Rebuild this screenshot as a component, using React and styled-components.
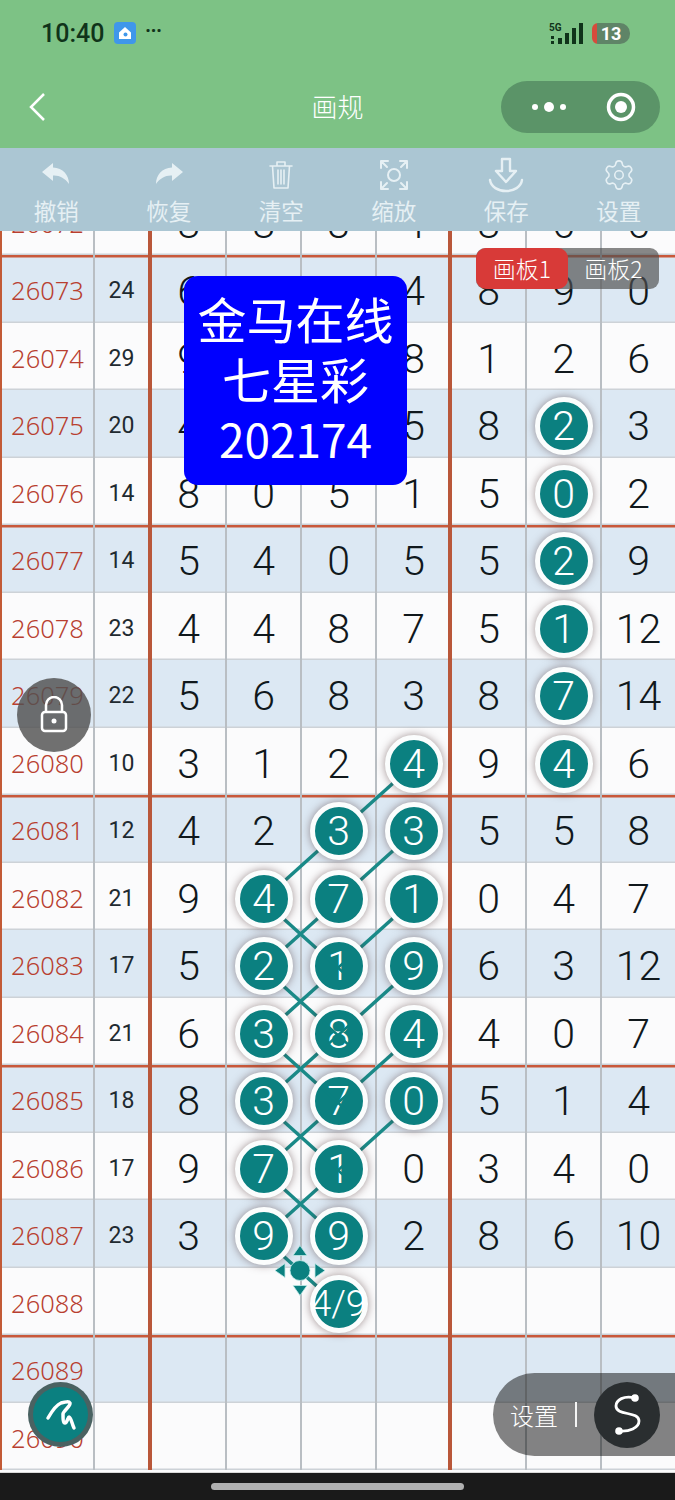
import React from "react";
import styled, { createGlobalStyle } from "styled-components";
import { Settings } from "lucide-react";

const ROW_H = 67.5;
const TEAL = "#0b8080";

const rows = [
  ["26072", "16", "8 8 3 4 8 6 6"],
  ["26073", "24", "6 1 0 4 8 9 0"],
  ["26074", "29", "9 3 2 8 1 2 6"],
  ["26075", "20", "4 3 2 5 8 *2 3"],
  ["26076", "14", "8 0 5 1 5 *0 2"],
  ["26077", "14", "5 4 0 5 5 *2 9"],
  ["26078", "23", "4 4 8 7 5 *1 12"],
  ["26079", "22", "5 6 8 3 8 *7 14"],
  ["26080", "10", "3 1 2 *4 9 *4 6"],
  ["26081", "12", "4 2 *3 *3 5 5 8"],
  ["26082", "21", "9 *4 *7 *1 0 4 7"],
  ["26083", "17", "5 *2 *1 *9 6 3 12"],
  ["26084", "21", "6 *3 *8 *4 4 0 7"],
  ["26085", "18", "8 *3 *7 *0 5 1 4"],
  ["26086", "17", "9 *7 *1 0 3 4 0"],
  ["26087", "23", "3 *9 *9 2 8 6 10"],
  ["26088", "", "- - *4/9 - - - -"],
  ["26089", "", "- - - - - - -"],
  ["26090", "", "- - - - - - -"],
];

// [col, row] of each end, col 0 is the first digit column
const links = [
  [[3, 8], [1, 10]],
  [[3, 9], [1, 11]],
  [[3, 10], [1, 12]],
  [[3, 11], [1, 13]],
  [[3, 12], [1, 14]],
  [[3, 13], [1, 15]],
  [[1, 10], [2, 11]],
  [[1, 11], [2, 12]],
  [[1, 12], [2, 13]],
  [[1, 13], [2, 14]],
  [[1, 14], [2, 15]],
  [[1, 15], [2, 16]],
];

// spots where the line shows through the ball
const crossed = [[2, 11], [2, 12], [2, 13], [2, 14]];

const px = (col) => 151 + 75 * (col + 0.5) - 0.5;
const py = (row) => ROW_H * (row + 0.5) + 3.5;

const GlobalStyle = createGlobalStyle`
  html, body {
    margin: 0;
    padding: 0;
    background: #1a1a1a;
  }
  body {
    font-family: "Noto Sans", "Noto Sans CJK SC", sans-serif;
  }
`;

const Page = styled.div`
  position: relative;
  width: 675px;
  height: 1500px;
  overflow: hidden;
  display: flex;
  flex-direction: column;
`;

const Header = styled.header`
  height: 148px;
  background: #7dc285;
  flex: none;
  display: flex;
  flex-direction: column;
`;

const StatusBar = styled.div`
  height: 66px;
  padding: 0 45px 0 41px;
  display: flex;
  align-items: center;
  color: #10331a;
`;

const Clock = styled.span`
  font-family: "Roboto", sans-serif;
  font-size: 25px;
  font-weight: 500;
  margin-right: 10px;
`;

const Dots = styled.span`
  font-size: 18px;
  font-weight: 700;
  letter-spacing: 0.5px;
  margin: -6px 0 0 9px;
`;

const StatusRight = styled.div`
  margin-left: auto;
  display: flex;
  align-items: center;
  gap: 6px;
`;

const Battery = styled.div`
  width: 38px;
  height: 21px;
  border-radius: 6px 10px 10px 6px;
  background: linear-gradient(90deg, #d64b3c 0 5px, #5f8467 5px);
  color: #fff;
  font-family: "Roboto", sans-serif;
  font-size: 18px;
  font-weight: 700;
  line-height: 21px;
  text-align: center;
`;

const NavBar = styled.div`
  height: 82px;
  padding: 0 15px 0 28px;
  display: flex;
  align-items: center;
  justify-content: space-between;
`;

const Title = styled.div`
  position: absolute;
  left: 0;
  right: 0;
  margin-top: -3px;
  text-align: center;
  color: #fff;
  font-size: 26px;
  font-family: "Noto Sans CJK SC", sans-serif;
  font-weight: 300;
`;

const Capsule = styled.div`
  width: 159px;
  height: 52px;
  border-radius: 26px;
  background: #5b9468;
  display: flex;
  align-items: center;
  justify-content: space-between;
  padding: 0 24px 0 30px;
  box-sizing: border-box;
`;

const Toolbar = styled.nav`
  height: 83px;
  flex: none;
  background: #abc6d3;
  display: flex;
  position: relative;
  z-index: 5;
`;

const ToolItem = styled.div`
  flex: 1;
  display: flex;
  flex-direction: column;
  align-items: center;
  color: #e6f0f4;
`;

const ToolIcon = styled.div`
  height: 32px;
  margin-top: 11px;
  display: flex;
  align-items: center;
  justify-content: center;
`;

const ToolLabel = styled.span`
  margin-top: 4px;
  font-family: "Noto Sans CJK SC", sans-serif;
  font-size: 22.5px;
  line-height: 30px;
`;

const Scroller = styled.main`
  flex: 1;
  overflow: hidden;
  position: relative;
  background: #fbfbfc;
`;

const Sheet = styled.div`
  position: relative;
  margin-top: -43.5px;
`;

const Row = styled.div`
  display: grid;
  grid-template-columns: 95px 57px repeat(7, 75px);
  width: 677px;
  height: ${ROW_H}px;
  background: ${(p) => (p.$shaded ? "#dce8f3" : "#fbfbfc")};
  box-shadow: inset 2px 0 0 #c25a36
    ${(p) => (p.$major ? ", inset 0 2.5px 0 #c9583a" : "")},
    inset 0 -1.5px 0 #cdd2d7;
`;

const IdCell = styled.div`
  display: flex;
  align-items: center;
  justify-content: center;
  padding-top: 3px;
  color: #b83f30;
  font-size: 25.5px;
  font-weight: 300;
  box-shadow: inset -2px 0 0 #b9bec3;
`;

const SumCell = styled.div`
  display: flex;
  align-items: center;
  justify-content: center;
  padding: 4px 4px 0 0;
  color: #1f2a30;
  font-size: 23px;
  font-weight: 400;
  font-family: "Roboto", sans-serif;
  box-shadow: inset -4px 0 0 #b9573a;
`;

const Cell = styled.div`
  display: flex;
  align-items: center;
  justify-content: center;
  padding: 5px 2px 0 0;
  color: #10181c;
  font-family: "Roboto", sans-serif;
  font-size: 41px;
  font-weight: 300;
  box-shadow: inset ${(p) => (p.$edge ? "-4px 0 0 #b9573a" : "-2px 0 0 #b9bec3")};
`;

const Ball = styled.div`
  position: relative;
  z-index: 2;
  flex: none;
  width: 48px;
  height: 48px;
  border-radius: 50%;
  background: ${TEAL};
  border: 5px solid #fbfdfd;
  box-shadow: 0 0 9px rgba(70, 40, 40, 0.5);
  color: #fff;
  display: flex;
  align-items: center;
  justify-content: center;
  font-size: ${(p) => (p.$long ? 37 : 41)}px;
  font-weight: 300;
  white-space: nowrap;
`;

const LineLayer = styled.svg`
  position: absolute;
  left: 0;
  top: 0;
  width: 675px;
  height: 1290px;
  z-index: ${(p) => p.$z};
  pointer-events: none;
`;

const Notice = styled.div`
  position: absolute;
  left: 184px;
  top: 276px;
  width: 223px;
  height: 209px;
  border-radius: 14px;
  background: #0000ff;
  color: #fff;
  font-family: "Noto Sans CJK SC", sans-serif;
  font-size: 49px;
  line-height: 59.5px;
  text-align: center;
  padding-top: 12px;
  box-sizing: border-box;
  z-index: 6;
`;

const NoticeNumber = styled.span`
  font-size: 46px;
`;

const Tabs = styled.div`
  position: absolute;
  left: 476px;
  top: 248px;
  width: 183px;
  height: 41px;
  z-index: 6;
  display: flex;
  border-radius: 9px;
  background: rgba(80, 80, 80, 0.68);
`;

const Tab = styled.div`
  flex: ${(p) => (p.$active ? "0 0 92px" : "1")};
  border-radius: 10px;
  background: ${(p) => (p.$active ? "#d83a38" : "transparent")};
  color: #fff;
  font-family: "Noto Sans CJK SC", sans-serif;
  font-size: 23px;
  font-weight: 300;
  line-height: 41px;
  text-align: center;
`;

const RoundButton = styled.div`
  position: absolute;
  z-index: 6;
  left: ${(p) => p.$x}px;
  top: ${(p) => p.$y}px;
  width: ${(p) => p.$size}px;
  height: ${(p) => p.$size}px;
  border-radius: 50%;
  box-sizing: border-box;
  background: ${(p) => p.$bg};
  border: ${(p) => p.$ring || "none"};
  display: flex;
  align-items: center;
  justify-content: center;
`;

const SidePill = styled.div`
  position: absolute;
  z-index: 6;
  right: 0;
  top: 1373px;
  width: 182px;
  height: 83px;
  border-radius: 42px 0 0 42px;
  background: rgba(10, 10, 10, 0.5);
  display: flex;
  align-items: center;
  padding-left: 17px;
  box-sizing: border-box;
`;

const PillLabel = styled.span`
  color: #fff;
  font-family: "Noto Sans CJK SC", sans-serif;
  font-size: 24px;
  font-weight: 300;
`;

const PillDivider = styled.span`
  width: 2px;
  height: 25px;
  margin: 0 17px;
  background: #f4f4f4;
`;

const SButton = styled.div`
  width: 66px;
  height: 66px;
  border-radius: 50%;
  background: #2a2e30;
  display: flex;
  align-items: center;
  justify-content: center;
`;

const HomeBar = styled.footer`
  flex: none;
  height: 28px;
  background: #1a1a1a;
  border-top: 1px solid #d8d8d8;
  box-sizing: border-box;
  display: flex;
  justify-content: center;
  padding-top: 10px;
`;

const HomeHandle = styled.span`
  width: 253px;
  height: 7px;
  border-radius: 4px;
  background: #b0b0b0;
`;

const toolStroke = {
  fill: "none",
  stroke: "#e6f0f4",
  strokeWidth: 1.6,
  strokeLinecap: "round",
  strokeLinejoin: "round",
};

const tools = [
  {
    label: "撤销",
    icon: (
      <svg width="30" height="30" viewBox="0 0 30 30">
        <path d="M12 3 1 12l11 9v-5.500c6-.5 12 2.500 16 8.500 0-9-6-16-16-16.500z" fill="#e6f0f4" />
      </svg>
    ),
  },
  {
    label: "恢复",
    icon: (
      <svg width="30" height="30" viewBox="0 0 30 30">
        <path d="M18 3l11 9-11 9v-5.500c-6-.5-12 2.500-16 8.500 0-9 6-16 16-16.500z" fill="#e6f0f4" />
      </svg>
    ),
  },
  {
    label: "清空",
    icon: (
      <svg width="30" height="32" viewBox="0 0 30 32" {...toolStroke}>
        <path d="M4 7h22M11 7V3h8v4M6.500 7l1.500 22h14l1.500-22M12 11v14M15 11v14M18 11v14" />
      </svg>
    ),
  },
  {
    label: "缩放",
    icon: (
      <svg width="30" height="32" viewBox="0 0 30 32" {...toolStroke} strokeWidth="2">
        <circle cx="15" cy="16" r="6" />
        <path d="M2 9V2h7M21 2h7v7M28 23v7h-7M9 30H2v-7M3 3l5 5M27 3l-5 5M27 29l-5-5M3 29l5-5" />
      </svg>
    ),
  },
  {
    label: "保存",
    icon: (
      <svg width="36" height="36" viewBox="0 0 36 36" {...toolStroke} strokeWidth="2.400">
        <path d="M14 2h8v12h6l-10 11L8 14h6zM2 23c1 7 8 11 16 11s15-4 16-11" />
      </svg>
    ),
  },
  {
    label: "设置",
    icon: <Settings size={34} strokeWidth={1.1} color="#e6f0f4" />,
  },
];

function renderCell(value, i) {
  const edge = i === 3;
  if (value === "-") return <Cell key={i} $edge={edge} />;
  if (value[0] === "*") {
    const text = value.slice(1);
    return (
      <Cell key={i} $edge={edge}>
        <Ball $long={text.length > 1}>{text}</Ball>
      </Cell>
    );
  }
  return (
    <Cell key={i} $edge={edge}>
      {value}
    </Cell>
  );
}

export default function App() {
  const hx = 300;
  const hy = 1270 - 187.5;
  return (
    <Page>
      <GlobalStyle />
      <Header>
        <StatusBar>
          <Clock>10:40</Clock>
          <svg width="22" height="22" viewBox="0 0 22 22">
            <rect width="22" height="22" rx="4" fill="#3f97ea" />
            <path d="M11 5 5 10.500V17h12v-6.500z" fill="#fff" />
            <circle cx="11.500" cy="12.500" r="2" fill="#3f97ea" />
          </svg>
          <Dots>···</Dots>
          <StatusRight>
            <svg width="37" height="24" viewBox="0 0 37 24" fill="#10331a">
              <text x="0" y="10" fontSize="10" fontWeight="700" fontFamily="Roboto">5G</text>
              <rect x="2" y="15" width="3" height="3" />
              <rect x="2" y="20" width="3" height="3" />
              <rect x="9" y="17" width="4" height="6" />
              <rect x="16" y="12" width="4" height="11" />
              <rect x="23" y="7" width="4" height="16" />
              <rect x="30" y="2" width="4" height="21" />
            </svg>
            <Battery>13</Battery>
          </StatusRight>
        </StatusBar>
        <NavBar>
          <svg width="18" height="30" viewBox="0 0 18 30" fill="none" stroke="#fff" strokeWidth="2.500">
            <path d="M16 2 3 15l13 13" />
          </svg>
          <Title>画规</Title>
          <Capsule>
            <svg width="36" height="12" viewBox="0 0 36 12" fill="#fff">
              <circle cx="4" cy="6" r="3" />
              <circle cx="18" cy="6" r="5" />
              <circle cx="32" cy="6" r="3" />
            </svg>
            <svg width="30" height="30" viewBox="0 0 30 30">
              <circle cx="15" cy="15" r="12.500" fill="none" stroke="#fff" strokeWidth="3.500" />
              <circle cx="15" cy="15" r="6" fill="#fff" />
            </svg>
          </Capsule>
        </NavBar>
      </Header>

      <Toolbar>
        {tools.map((tool) => (
          <ToolItem key={tool.label}>
            <ToolIcon>{tool.icon}</ToolIcon>
            <ToolLabel>{tool.label}</ToolLabel>
          </ToolItem>
        ))}
      </Toolbar>

      <Scroller>
        <Sheet>
          <LineLayer $z={1}>
            {links.map(([a, b], i) => (
              <line
                key={i}
                x1={px(a[0])}
                y1={py(a[1])}
                x2={px(b[0])}
                y2={py(b[1])}
                stroke="#1a8a88"
                strokeWidth="3.500"
              />
            ))}
          </LineLayer>
          {rows.map(([id, sum, cells], r) => (
            <Row key={id} $shaded={r % 2 === 1} $major={r % 4 === 1}>
              <IdCell>{id}</IdCell>
              <SumCell>{sum}</SumCell>
              {cells.split(" ").map(renderCell)}
            </Row>
          ))}
          <LineLayer $z={3}>
            {crossed.map(([c, r]) => (
              <g key={r} stroke={TEAL} strokeWidth="2.500">
                <line x1={px(c) - 15} y1={py(r) + 13.5} x2={px(c) + 15} y2={py(r) - 13.5} />
                <line x1={px(c) - 15} y1={py(r) - 13.5} x2={px(c) + 15} y2={py(r) + 13.5} />
              </g>
            ))}
            <g fill={TEAL} stroke="#bfe9e6" strokeWidth="0.800">
              <circle cx={hx} cy={hy} r="10" />
              <path d={`M${hx} ${hy - 25}l7 10h-14z`} />
              <path d={`M${hx} ${hy + 25}l7-10h-14z`} />
              <path d={`M${hx - 25} ${hy}l10-7v14z`} />
              <path d={`M${hx + 25} ${hy}l-10-7v14z`} />
            </g>
          </LineLayer>
        </Sheet>
      </Scroller>

      <HomeBar>
        <HomeHandle />
      </HomeBar>

      <Notice>
        金马在线
        <br />
        七星彩
        <br />
        <NoticeNumber>202174</NoticeNumber>
      </Notice>

      <Tabs>
        <Tab $active>画板1</Tab>
        <Tab>画板2</Tab>
      </Tabs>

      <RoundButton $x={17} $y={678} $size={74} $bg="rgba(80, 80, 80, 0.82)">
        <svg width="30" height="38" viewBox="0 0 30 38" fill="none" stroke="#fff" strokeWidth="2.500">
          <rect x="3" y="16" width="24" height="19" rx="3" />
          <path d="M7 16V9a8 8 0 0 1 16 0v7" />
          <circle cx="15" cy="25" r="2.500" fill="#fff" stroke="none" />
        </svg>
      </RoundButton>

      <RoundButton $x={28} $y={1382} $size={65} $bg={TEAL} $ring="5px solid rgba(90, 90, 90, 0.8)">
        <svg width="36" height="36" viewBox="0 0 36 36" fill="none" stroke="#fff" strokeWidth="3.500" strokeLinecap="round" strokeLinejoin="round">
          <path d="M5 21C9 14 13 8 18 6c4-1 8-2 9 0 1 3-7 8-7 11 0 4 0 9 2 9 2 0 3-6 4-6 2 0 3 7 5 11" />
        </svg>
      </RoundButton>

      <SidePill>
        <PillLabel>设置</PillLabel>
        <PillDivider />
        <SButton>
          <svg width="36" height="46" viewBox="0 0 36 46" fill="none" stroke="#fff" strokeWidth="2.800">
            <path d="M26 6C15 3 7 8 7 14c0 10 23 5 23 15 0 7-10 11-20 10" />
            <circle cx="26" cy="6" r="3.800" fill="#fff" stroke="none" />
            <circle cx="10" cy="39" r="3.800" fill="#fff" stroke="none" />
          </svg>
        </SButton>
      </SidePill>
    </Page>
  );
}
